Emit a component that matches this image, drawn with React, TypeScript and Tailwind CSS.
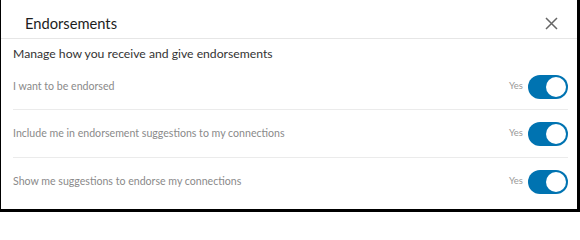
import { useState } from "react";

type Row = { label: string; height: string; on: boolean };

const rows: Row[] = [
  { label: "I want to be endorsed", height: "h-[46px]", on: true },
  { label: "Include me in endorsement suggestions to my connections", height: "h-[48px]", on: true },
  { label: "Show me suggestions to endorse my connections", height: "h-[47px]", on: true },
];

const Toggle = ({ on, onClick }: { on: boolean; onClick: () => void }) => (
  <button
    onClick={onClick}
    className={`relative w-[40px] h-[24px] rounded-full ${on ? "bg-[#0073b1]" : "bg-gray-400"}`}
  >
    <span
      className={`absolute top-[2px] w-[20px] h-[20px] rounded-full bg-white ${on ? "right-[2px]" : "left-[2px]"}`}
    />
  </button>
);

const App = () => {
  const [state, setState] = useState(rows.map((r) => r.on));

  return (
    <div
      className="w-[580px] h-[212px] bg-white border-l border-r-[3px] border-b-[3px] border-black flex flex-col"
      style={{ fontFamily: 'Lato, "Open Sans", sans-serif' }}
    >
      <div className="h-[39px] flex items-center justify-between border-b border-[#e6e6e6] pt-[9px] pl-[24px] pr-[19px]">
        <h2 className="text-[14.7px] text-[#1d1d1d] leading-none">Endorsements</h2>
        <svg width="13" height="13" viewBox="0 0 13 13" className="text-[#666]">
          <path d="M1 1L12 12M12 1L1 12" stroke="currentColor" strokeWidth="1.5" fill="none" />
        </svg>
      </div>

      <div className="pl-[12px] pr-[9px]">
        <p className="pt-[5px] leading-[20px] text-[12.2px] text-[#333]">
          Manage how you receive and give endorsements
        </p>
        {rows.map((row, i) => (
          <div
            key={row.label}
            className={`${row.height} flex items-center justify-between ${i < rows.length - 1 ? "border-b border-[#ebebeb]" : ""}`}
          >
            <span className="text-[10.6px] text-[#8a8a8a]">{row.label}</span>
            <div className="flex items-center gap-[5px]">
              <span className="text-[9.5px] text-[#999]">Yes</span>
              <Toggle
                on={state[i]}
                onClick={() => setState((s) => s.map((v, j) => (j === i ? !v : v)))}
              />
            </div>
          </div>
        ))}
      </div>
    </div>
  );
};

export default App;
